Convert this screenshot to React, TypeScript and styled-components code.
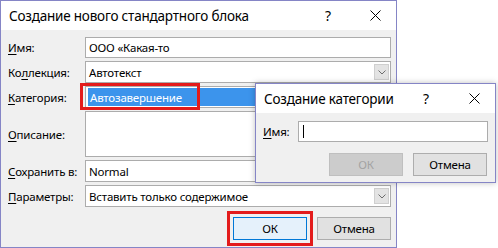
import React from "react";
import styled, { createGlobalStyle } from "styled-components";

const Global = createGlobalStyle`
  html, body {
    margin: 0;
    padding: 0;
    background: #ffffff;
  }
  body {
    font-family: "Noto Sans", "Open Sans", sans-serif;
    font-size: 11.5px;
    letter-spacing: -0.2px;
    color: #000000;
  }
`;

const Stage = styled.div`
  position: relative;
  width: 498px;
  height: 248px;
  overflow: hidden;
`;

const Window = styled.div<{ $w: number; $h: number }>`
  box-sizing: border-box;
  width: ${(p) => p.$w}px;
  height: ${(p) => p.$h}px;
  border: 1px solid #8585c6;
  background: #f0f0f0;
  display: flex;
  flex-direction: column;
`;

const Popup = styled(Window)`
  position: absolute;
  left: 255px;
  top: 83px;
  box-shadow: 0 0 6px rgba(0, 0, 0, 0.25);
`;

const TitleBar = styled.div<{ $right: number }>`
  height: 29px;
  background: #ffffff;
  display: flex;
  align-items: center;
  padding-left: 8px;
  padding-right: ${(p) => p.$right}px;
  flex-shrink: 0;
`;

const Title = styled.div`
  flex: 1;
  font-size: 13.5px;
  letter-spacing: -0.2px;
  color: #000000;
  white-space: nowrap;
`;

const Help = styled.span`
  font-size: 14px;
  width: 12px;
  text-align: center;
`;

const CloseBox = styled.span<{ $gap: number }>`
  display: flex;
  margin-left: ${(p) => p.$gap}px;
`;

const Form = styled.div`
  display: grid;
  grid-template-columns: 77px 1fr;
  grid-auto-rows: auto;
  row-gap: 3px;
  padding: 7px 5px 0 7px;
  align-items: center;
`;

const Label = styled.label`
  white-space: nowrap;
  u {
    text-decoration: underline;
    text-underline-offset: 2px;
  }
`;

const Field = styled.div<{ $h?: number }>`
  position: relative;
  box-sizing: border-box;
  height: ${(p) => p.$h ?? 21}px;
  background: #ffffff;
  border: 1px solid #acacac;
  display: flex;
  align-items: center;
  padding-left: 3px;
  white-space: nowrap;
`;

const PopupField = styled(Field)`
  flex: 1;
  padding-left: 4px;
`;

const Highlight = styled.div`
  flex: 1;
  align-self: stretch;
  margin: 1px 1px 1px -1px;
  background: #3c94ec;
  color: #ffffff;
  display: flex;
  align-items: center;
  padding-left: 2px;
`;

const DropButton = styled.div`
  margin-left: auto;
  width: 15px;
  align-self: stretch;
  margin-top: 2px;
  margin-bottom: 2px;
  margin-right: 1px;
  background: #e3e3e3;
  border: 1px solid #cfcfcf;
  box-sizing: border-box;
  display: flex;
  align-items: center;
  justify-content: center;
`;

const Buttons = styled.div<{ $top: number; $right: number }>`
  display: flex;
  justify-content: flex-end;
  gap: 10px;
  margin-top: ${(p) => p.$top}px;
  padding-right: ${(p) => p.$right}px;
`;

const Button = styled.div<{ $kind?: "default" | "disabled" }>`
  box-sizing: border-box;
  width: 74px;
  height: 23px;
  display: flex;
  align-items: center;
  justify-content: center;
  background: ${(p) =>
    p.$kind === "default" ? "#e5f1fb" : p.$kind === "disabled" ? "#cccccc" : "#e1e1e1"};
  border: 1px solid
    ${(p) =>
      p.$kind === "default" ? "#0078d7" : p.$kind === "disabled" ? "#bfbfbf" : "#adadad"};
  color: ${(p) => (p.$kind === "disabled" ? "#a3a3a3" : "#000000")};
`;

const RedFrame = styled.div<{ $pad: number }>`
  border: 3px solid #e31b1b;
  padding: ${(p) => p.$pad}px;
  margin: -${(p) => p.$pad + 3}px;
`;

const CategoryMark = styled.div`
  position: absolute;
  left: 80px;
  top: 83px;
  width: 120px;
  height: 27px;
  box-sizing: border-box;
  border: 3px solid #e31b1b;
`;

const PopupBody = styled.div`
  display: flex;
  align-items: center;
  padding: 8px 7px 0 7px;
  gap: 9px;
`;

const Caret = styled.span`
  display: inline-block;
  width: 1px;
  height: 13px;
  background: #000000;
`;

const Close = () => (
  <svg width="11" height="11" viewBox="0 0 11 11">
    <path d="M0.5 0.5 L10.5 10.5 M10.5 0.5 L0.5 10.5" stroke="#000" strokeWidth="1" />
  </svg>
);

const Chevron = () => (
  <svg width="8" height="5" viewBox="0 0 8 5">
    <path d="M0.5 0.5 L4 4 L7.5 0.5" stroke="#6d6d6d" strokeWidth="1" fill="none" />
  </svg>
);

export default function App() {
  return (
    <Stage>
      <Global />
      <Window $w={397} $h={248}>
        <TitleBar $right={15}>
          <Title>Создание нового стандартного блока</Title>
          <Help>?</Help>
          <CloseBox $gap={36}>
            <Close />
          </CloseBox>
        </TitleBar>
        <Form>
          <Label>
            <u>И</u>мя:
          </Label>
          <Field>ООО «Какая-то</Field>

          <Label>
            Ко<u>л</u>лекция:
          </Label>
          <Field $h={22}>
            Автотекст
            <DropButton>
              <Chevron />
            </DropButton>
          </Field>

          <Label>
            <u>К</u>атегория:
          </Label>
          <Field $h={22}>
            <Highlight>Автозавершение</Highlight>
          </Field>

          <Label>
            <u>О</u>писание:
          </Label>
          <Field $h={46} />

          <Label>
            <u>С</u>охранить в:
          </Label>
          <Field $h={22}>Normal</Field>

          <Label>
            <u>П</u>араметры:
          </Label>
          <Field $h={22}>
            Вставить только содержимое
            <DropButton>
              <Chevron />
            </DropButton>
          </Field>
        </Form>
        <Buttons $top={10} $right={5}>
          <RedFrame $pad={3}>
            <Button $kind="default">ОК</Button>
          </RedFrame>
          <Button>Отмена</Button>
        </Buttons>
      </Window>
      <CategoryMark />

      <Popup $w={241} $h={100}>
        <TitleBar $right={15}>
          <Title>Создание категории</Title>
          <Help>?</Help>
          <CloseBox $gap={37}>
            <Close />
          </CloseBox>
        </TitleBar>
        <PopupBody>
          <Label>
            <u>И</u>мя:
          </Label>
          <PopupField>
            <Caret />
          </PopupField>
        </PopupBody>
        <Buttons $top={11} $right={8}>
          <Button $kind="disabled">ОК</Button>
          <Button>Отмена</Button>
        </Buttons>
      </Popup>
    </Stage>
  );
}
